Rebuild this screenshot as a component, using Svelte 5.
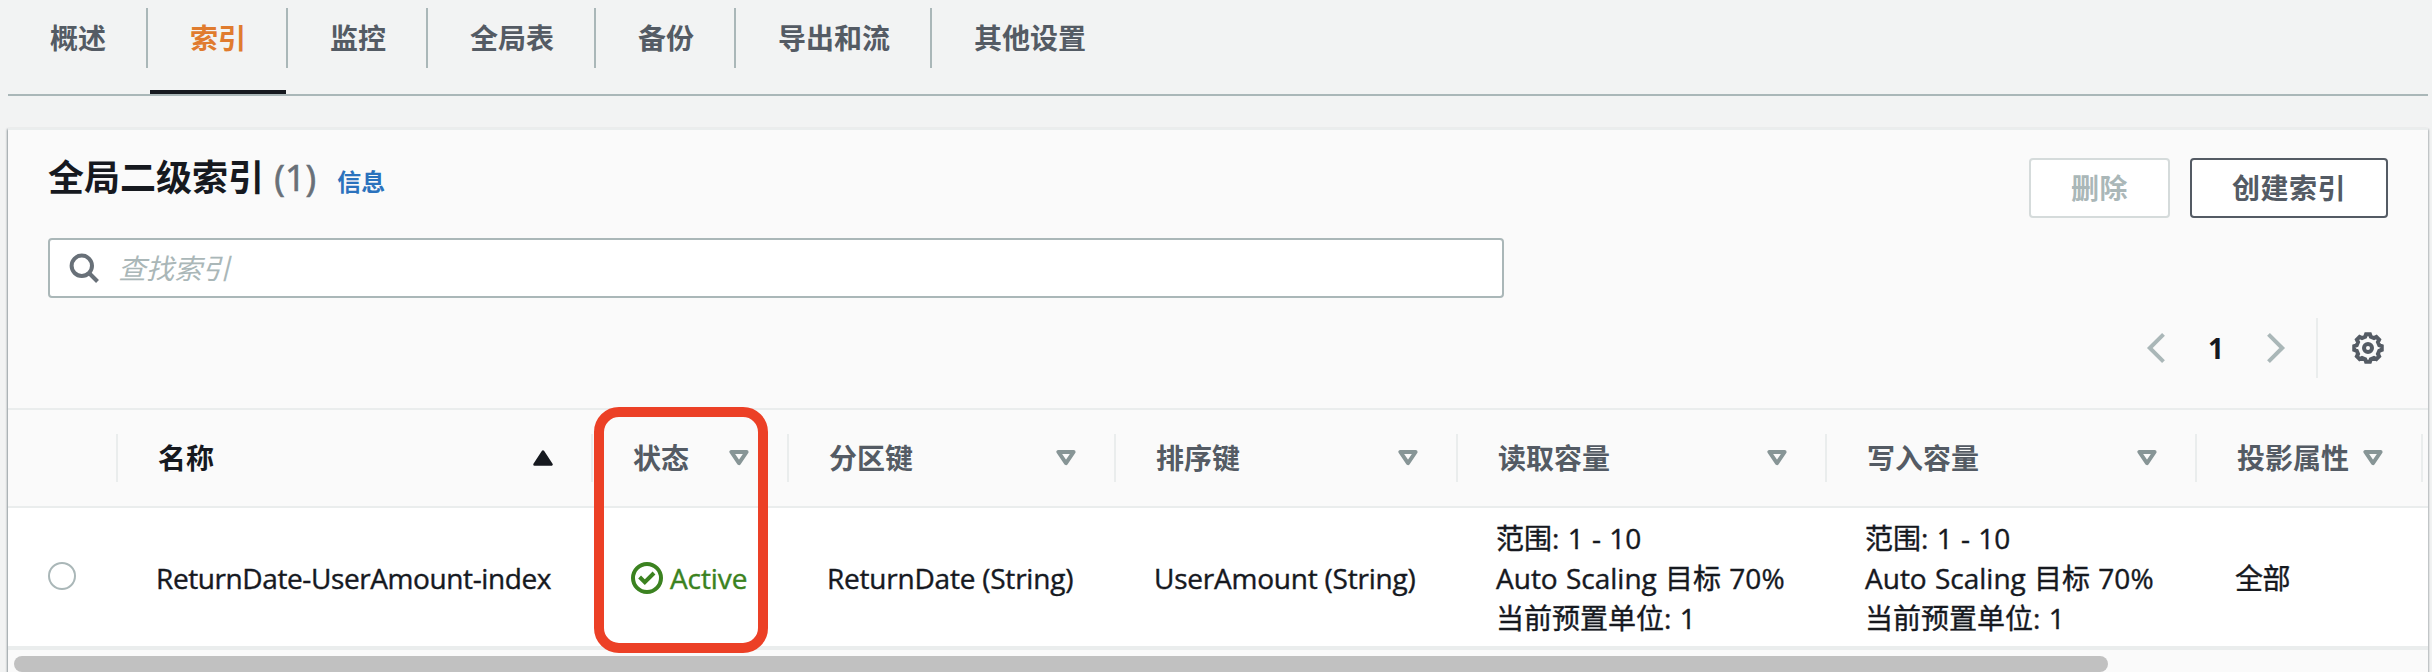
<script>
  const tabs = ['概述', '索引', '监控', '全局表', '备份', '导出和流', '其他设置'];
  const active = '索引';
  const columns = [
    { label: '名称', sorted: true },
    { label: '状态' },
    { label: '分区键' },
    { label: '排序键' },
    { label: '读取容量' },
    { label: '写入容量' },
    { label: '投影属性' }
  ];
  const capacity = ['范围: 1 - 10', 'Auto Scaling 目标 70%', '当前预置单位: 1'];

  const pt = (r, deg) => {
    const a = (deg * Math.PI) / 180;
    return `${(16 + r * Math.cos(a)).toFixed(2)},${(16 + r * Math.sin(a)).toFixed(2)}`;
  };
  const gear = Array.from({ length: 8 }, (_, i) => i * 45)
    .map((a) => [pt(13.9, a - 8), pt(13.9, a + 8), pt(11.6, a + 14), pt(11.6, a + 31)].join(' '))
    .join(' ');
</script>

<main>
  <nav>
    {#each tabs as tab}
      <a class:active={tab === active}><span>{tab}</span></a>
    {/each}
  </nav>

  <section class="panel">
    <header>
      <h2>全局二级索引 <span class="count">(1)</span><a class="info">信息</a></h2>
      <div class="actions">
        <button class="disabled">删除</button>
        <button>创建索引</button>
      </div>
    </header>

    <div class="search">
      <svg width="32" height="32" viewBox="0 0 32 32" fill="none" stroke="#687078" stroke-width="4">
        <circle cx="13.8" cy="13.8" r="10.2" />
        <path d="M21 21l8.5 8.5" />
      </svg>
      <span>查找索引</span>
    </div>

    <div class="tools">
      <svg class="prev" width="20" height="32" viewBox="0 0 20 32"><path d="M17.5 2.4L3.8 16l13.7 13.6" /></svg>
      <b>1</b>
      <svg class="next" width="20" height="32" viewBox="0 0 20 32"><path d="M2.5 2.4L16.2 16 2.5 29.6" /></svg>
      <i></i>
      <svg class="gear" width="32" height="32" viewBox="0 0 32 32">
        <polygon points={gear} />
        <circle cx="16" cy="16" r="4" />
      </svg>
    </div>

    <div class="row head">
      <div class="th"></div>
      {#each columns as c}
        <div class="th" class:sorted={c.sorted}>
          <span>{c.label}</span>
          <svg width="20" height="16" viewBox="0 0 20 16">
            {#if c.sorted}
              <path d="M10 1.5L18.5 14.5H1.5z" fill="#16191f" stroke="#16191f" stroke-width="2.5" stroke-linejoin="round" />
            {:else}
              <path d="M2.4 2H17.6L10 13.2z" fill="none" stroke="#879596" stroke-width="4" stroke-linejoin="round" />
            {/if}
          </svg>
        </div>
      {/each}
    </div>

    <div class="row body">
      <div class="pick"><span class="radio"></span></div>
      <div class="td">ReturnDate-UserAmount-index</div>
      <div class="td status">
        <svg width="32" height="32" viewBox="0 0 32 32" fill="none" stroke="#3b8220" stroke-width="4">
          <circle cx="16" cy="16" r="14" />
          <path d="M8.6 15l5.2 5.2 9.2-9.2" />
        </svg>
        <span>Active</span>
      </div>
      <div class="td key">ReturnDate (String)</div>
      <div class="td key">UserAmount (String)</div>
      <div class="td capacity">{#each capacity as line}<div>{line}</div>{/each}</div>
      <div class="td capacity">{#each capacity as line}<div>{line}</div>{/each}</div>
      <div class="td">全部</div>
    </div>

    <div class="scroll"><div class="thumb"></div></div>
  </section>

  <div class="highlight"></div>
</main>

<style>
  :global(body) {
    background: #f2f3f3;
  }
  main {
    position: relative;
    box-sizing: border-box;
    width: 2432px;
    height: 672px;
    overflow: hidden;
    padding: 0 4px 0 8px;
    font-family: 'Open Sans', 'Noto Sans CJK SC', sans-serif;
    font-size: 28px;
    line-height: 40px;
    color: #16191f;
  }
  nav {
    display: flex;
    box-sizing: border-box;
    height: 96px;
    padding-top: 8px;
    border-bottom: 2px solid #aab7b8;
  }
  nav a {
    position: relative;
    box-sizing: border-box;
    height: 60px;
    line-height: 60px;
    padding: 0 40px 0 42px;
    border-right: 2px solid #aab7b8;
    font-weight: 700;
    color: #545b64;
  }
  nav a:last-child {
    border-right: 0;
  }
  nav a.active {
    color: #e07b2e;
  }
  nav a.active::after {
    content: '';
    position: absolute;
    left: 2px;
    right: 0;
    top: 82px;
    height: 4px;
    background: #16191f;
  }
  .panel {
    box-sizing: border-box;
    margin-top: 32px;
    height: 560px;
    border-top: 2px solid #eaeded;
    background: #fafafa;
    box-shadow: 0 2px 2px rgba(0, 28, 36, 0.3), 1px 1px 2px rgba(0, 28, 36, 0.15), -1px 1px 2px rgba(0, 28, 36, 0.3);
  }
  header {
    display: flex;
    justify-content: space-between;
    padding: 28px 40px 0;
    height: 80px;
  }
  h2 {
    margin: 0;
    font-size: 36px;
    line-height: 40px;
    font-weight: 700;
    white-space: pre;
  }
  .count {
    font-weight: 400;
    -webkit-text-stroke: 0.7px #687078;
    margin-left: 1px;
    color: #687078;
  }
  .info {
    margin-left: 21px;
    font-size: 24px;
    color: #2b72bd;
  }
  .actions {
    display: flex;
    gap: 20px;
  }
  button {
    box-sizing: border-box;
    height: 60px;
    padding: 0 40px;
    border: 2px solid #545b64;
    border-radius: 4px;
    background: #fff;
    color: #545b64;
    font: inherit;
    font-weight: 700;
    letter-spacing: 0.5px;
  }
  button.disabled {
    border-color: #d5dbdb;
    color: #aab7b8;
  }
  .search {
    display: flex;
    align-items: center;
    box-sizing: border-box;
    width: 1456px;
    height: 60px;
    margin-left: 40px;
    padding-left: 18px;
    border: 2px solid #aab7b8;
    border-radius: 4px;
    background: #fff;
  }
  .search span {
    margin-left: 18px;
    font-style: italic;
    color: #aab7b8;
  }
  .tools {
    display: flex;
    align-items: center;
    justify-content: flex-end;
    height: 60px;
    margin-top: 20px;
    padding: 0 44px 0 0;
  }
  .tools path,
  .gear {
    fill: none;
    stroke: #aab7b8;
    stroke-width: 4;
  }
  .gear {
    stroke: #545b64;
    margin-left: 34px;
  }
  .tools b {
    width: 24px;
    margin: 0 38px;
    text-align: center;
  }
  .tools i {
    width: 2px;
    height: 60px;
    margin-left: 30px;
    background: #eaeded;
  }
  .row {
    display: grid;
    grid-template-columns: 110px 475px 196px 327px 342px 369px 370px 226px;
  }
  .head {
    box-sizing: border-box;
    height: 100px;
    margin-top: 30px;
    padding-top: 24px;
    border-top: 2px solid #eaeded;
    border-bottom: 2px solid #eaeded;
  }
  .th {
    display: flex;
    align-items: center;
    justify-content: space-between;
    box-sizing: border-box;
    height: 48px;
    padding: 0 38px 0 40px;
    border-right: 2px solid #eaeded;
    font-weight: 700;
    color: #545b64;
    white-space: nowrap;
  }
  .sorted {
    color: #16191f;
  }
  .body {
    align-items: center;
    box-sizing: border-box;
    height: 142px;
    padding-top: 1px;
    border-bottom: 4px solid #eaeded;
    background: #fff;
  }
  .td {
    padding-left: 38px;
    white-space: nowrap;
    letter-spacing: -0.4px;
    -webkit-text-stroke: 0.4px currentColor;
  }
  .key {
    letter-spacing: -0.22px;
  }
  .capacity {
    letter-spacing: 0;
    word-spacing: 1px;
  }
  .pick {
    display: flex;
    padding: 0 0 3px 40px;
  }
  .radio {
    box-sizing: border-box;
    width: 28px;
    height: 28px;
    border: 2px solid #aab7b8;
    border-radius: 50%;
  }
  .status {
    display: flex;
    align-items: center;
    gap: 7px;
    letter-spacing: -0.1px;
    color: #3b8220;
  }
  .scroll {
    padding: 6px 6px 0;
  }
  .thumb {
    width: 2094px;
    height: 16px;
    border-radius: 8px;
    background: #c1c1c1;
  }
  .highlight {
    position: absolute;
    left: 594px;
    top: 407px;
    box-sizing: border-box;
    width: 174px;
    height: 246px;
    border: 10px solid #ec4026;
    border-radius: 25px;
  }
</style>
